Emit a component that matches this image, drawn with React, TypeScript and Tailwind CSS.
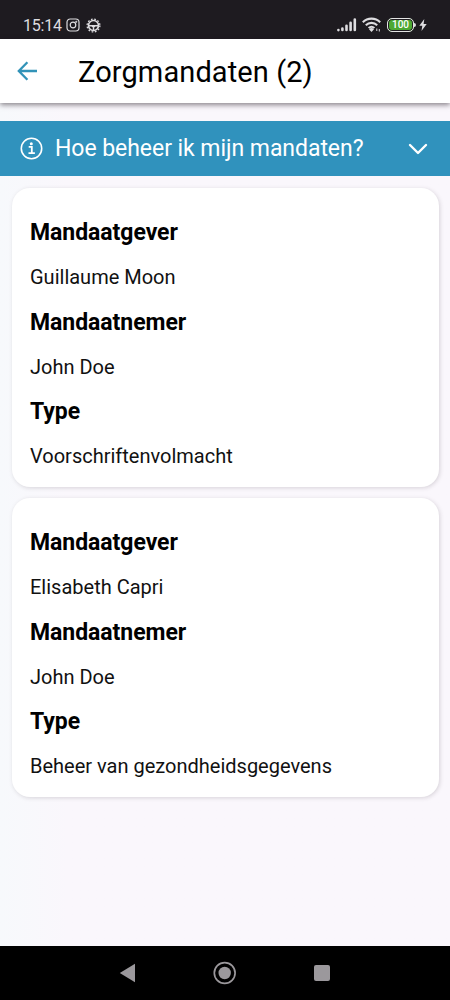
type Field = { label: string; value: string };

const mandates: Field[][] = [
  [
    { label: "Mandaatgever", value: "Guillaume Moon" },
    { label: "Mandaatnemer", value: "John Doe" },
    { label: "Type", value: "Voorschriftenvolmacht" },
  ],
  [
    { label: "Mandaatgever", value: "Elisabeth Capri" },
    { label: "Mandaatnemer", value: "John Doe" },
    { label: "Type", value: "Beheer van gezondheidsgegevens" },
  ],
];

function StatusBar() {
  return (
    <div className="flex h-[39px] shrink-0 items-center bg-[#1e1b20] pt-[11px] pr-[23px] pl-[23px] text-[#dedde0]">
      <span className="w-[42px] pt-px text-[16px] leading-5 tracking-[-0.2px] whitespace-nowrap">15:14</span>
      {/* Instagram */}
      <svg width="14" height="14" viewBox="0 0 14 14" fill="none" stroke="currentColor" strokeWidth="1.2" className="ml-px">
        <rect x="1" y="1" width="12" height="12" rx="3.2" />
        <circle cx="7" cy="7" r="2.8" />
        <circle cx="10.3" cy="3.7" r="0.4" />
      </svg>
      {/* Gear */}
      <svg width="15" height="15" viewBox="0 0 15 15" fill="none" stroke="currentColor" className="ml-[6px]">
        <circle cx="7.5" cy="7.5" r="5" strokeWidth="1.6" />
        <circle cx="7.5" cy="7.5" r="6.4" strokeWidth="1.3" strokeDasharray="1.7 1.65" />
        <path d="M2.5 7.8h10M7.5 8v4.5M6 8l1.5 1.4L9 8" strokeWidth="1.4" />
      </svg>
      <div className="ml-auto flex items-center">
        <svg width="20" height="14" viewBox="0 0 20 14" fill="none" stroke="currentColor" strokeWidth="2.6" strokeLinecap="round">
          <path d="M1.4 12v.1M5.4 10.6v1.4M9.5 7.8v4.2M13.6 4.8v7.2M17.8 1.6v10.4" />
        </svg>
        <svg width="20" height="16" viewBox="0 0 20 16" fill="none" stroke="currentColor" strokeWidth="2.1" className="ml-[5px]">
          <path d="M.8 5.2a12.4 12.4 0 0 1 17.4 0M3.8 8.2a8.2 8.2 0 0 1 11.4 0M6.6 11a4.4 4.4 0 0 1 5.8 0" />
          <path d="M7 12.2a3.5 3.5 0 0 1 5 0L9.5 15z" fill="currentColor" stroke="none" />
          <path d="M14.8 11.5v2.5M17.3 12v2.5" strokeWidth="1" />
        </svg>
        <div className="ml-[5px] flex h-[14px] w-[27px] items-center justify-center rounded-[5px] border-[1.5px] border-[#e4e4e4] bg-[#4ca832] text-[10px] leading-none font-medium text-white ring-1 ring-[#1e1b20] ring-inset">
          100
        </div>
        <div className="h-1 w-[2px] rounded-r bg-[#dedde0]" />
        <svg width="8" height="12" viewBox="0 0 8 12" fill="currentColor" className="ml-[3px]">
          <path d="M5.3 0L.3 6.7h3L2.5 12 7.7 5H4.6z" />
        </svg>
      </div>
    </div>
  );
}

function Header() {
  return (
    <header className="z-10 flex h-16 shrink-0 items-center bg-white pl-[17px] shadow-[0_2px_5px_rgba(30,20,30,0.5)]">
      <svg width="21" height="20" viewBox="0 0 21 20" fill="none" stroke="#3293b8" strokeWidth="2.3">
        <path d="M20 10H2M10.4 1.2L1.8 10l8.6 8.8" />
      </svg>
      <h1 className="ml-10 pt-px text-[29px] leading-9 tracking-[0.1px] text-black">Zorgmandaten (2)</h1>
    </header>
  );
}

function HelpBanner() {
  return (
    <button className="mt-[18px] flex h-[55px] w-full shrink-0 items-center bg-[#3092bd] pr-[22px] pl-5 text-white">
      <svg width="23" height="23" viewBox="0 0 23 23" fill="none" stroke="currentColor" strokeWidth="1.6">
        <circle cx="11.5" cy="11.5" r="10.2" />
        <path d="M8.7 9.9h3.1v6.2M8.5 16.2h6.4" strokeWidth="1.8" />
        <circle cx="11.3" cy="6.7" r="1.5" fill="currentColor" stroke="none" />
      </svg>
      <span className="ml-3 pt-px text-[23px] leading-7 tracking-[-0.05px]">Hoe beheer ik mijn mandaten?</span>
      <svg width="20" height="12" viewBox="0 0 20 12" fill="none" stroke="currentColor" strokeWidth="2.4" strokeLinecap="round" strokeLinejoin="round" className="ml-auto">
        <path d="M2 2l8 8 8-8" />
      </svg>
    </button>
  );
}

function MandateCard({ fields }: { fields: Field[] }) {
  return (
    <dl className="h-[299px] rounded-[18px] bg-white px-[18px] pt-[22px] text-black shadow-[1px_1px_4px_rgba(60,50,60,0.18)]">
      {fields.map((field) => (
        <div key={field.label} className="h-[89.6px]">
          <dt className="flex h-[45px] items-center pt-[2px] text-[23px] tracking-[-0.05px] font-bold">{field.label}</dt>
          <dd className="flex h-[44.4px] items-center text-[20px] text-[#111]">{field.value}</dd>
        </div>
      ))}
    </dl>
  );
}

function NavigationBar() {
  return (
    <nav className="flex h-[54px] shrink-0 items-center bg-black pl-[119px] text-[#9b989c]">
      <svg width="17" height="20" viewBox="0 0 17 20" fill="currentColor">
        <path d="M16 .8v18.4L.8 10z" />
      </svg>
      <svg width="24" height="24" viewBox="0 0 24 24" fill="none" stroke="currentColor" className="ml-[77px]">
        <circle cx="11.7" cy="12" r="10.4" strokeWidth="1.7" />
        <circle cx="11.7" cy="12" r="6.2" fill="currentColor" stroke="none" />
      </svg>
      <div className="ml-[77px] size-4 rounded-[2px] bg-current" />
    </nav>
  );
}

export default function App() {
  return (
    <div className="flex h-[1000px] w-[450px] flex-col overflow-hidden bg-linear-to-r from-[#f7f9fc] to-[#faf7fc] to-15% font-[Roboto,sans-serif]">
      <StatusBar />
      <Header />
      <HelpBanner />
      <main className="flex flex-1 flex-col gap-[11px] pt-3 pr-[11px] pl-3">
        {mandates.map((fields, idx) => (
          <MandateCard key={idx} fields={fields} />
        ))}
      </main>
      <NavigationBar />
    </div>
  );
}
